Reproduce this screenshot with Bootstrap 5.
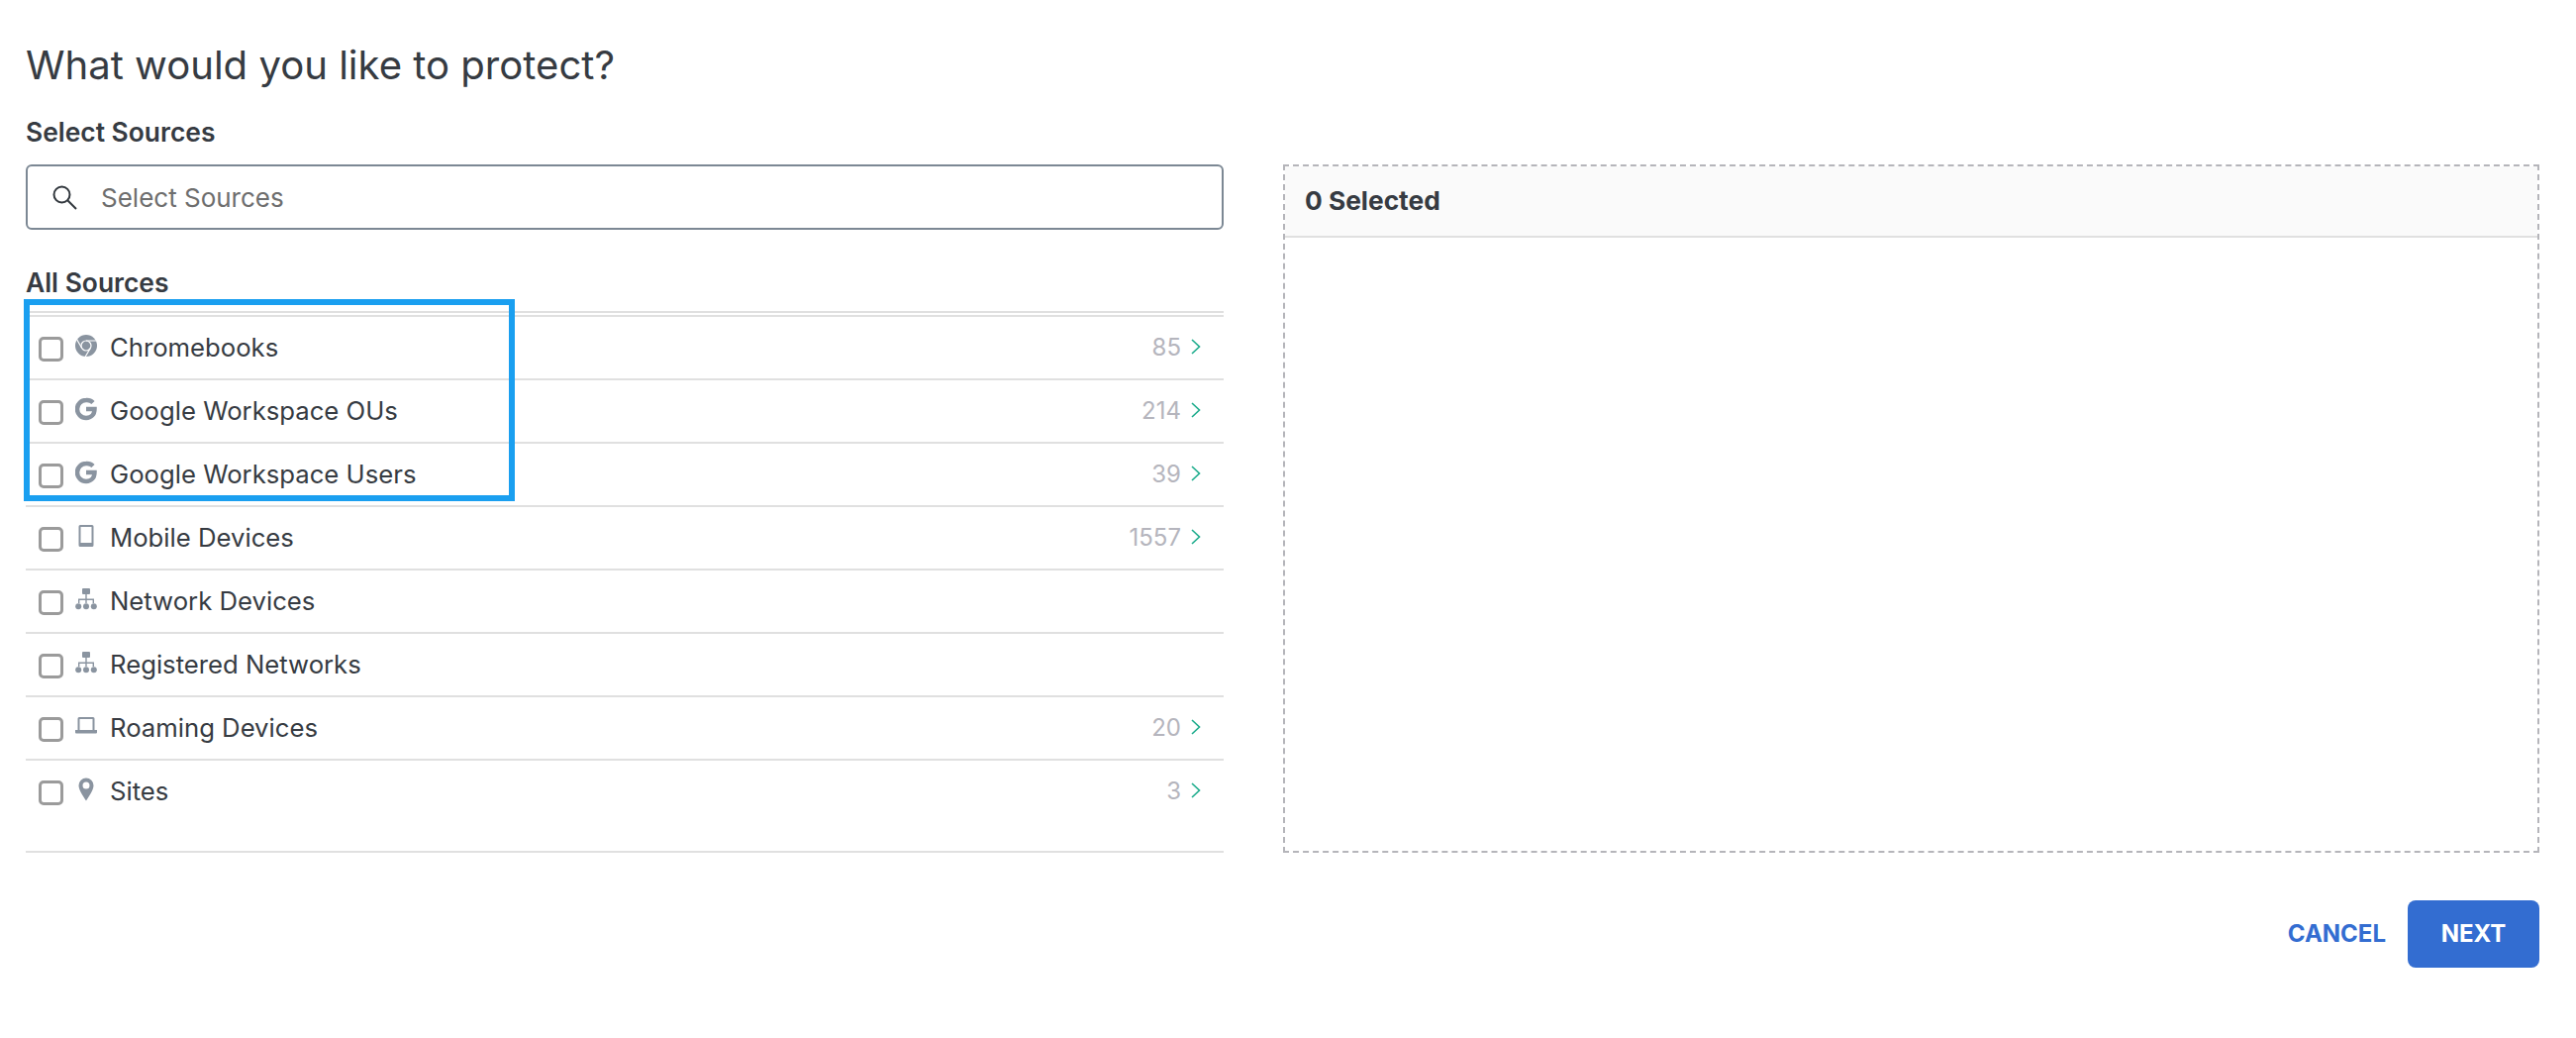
<!DOCTYPE html>
<html lang="en">
<head>
<meta charset="utf-8">
<title>What would you like to protect?</title>
<link href="https://cdn.jsdelivr.net/npm/bootstrap@5.3.0/dist/css/bootstrap.min.css" rel="stylesheet">
<style>
body{font-family:Inter,"Liberation Sans",sans-serif;color:#343a40;background:#fff;overflow:hidden}
.page-wrap{padding:43px 37px 0 26px}
.page-title{font-size:40.100px;line-height:46px;font-weight:400;margin:0 0 28px;color:#363b42}
.field-label{font-size:26.400px;line-height:32px;font-weight:600;margin:0;color:#363b42}
.panels{gap:60px;height:695px;margin-top:17px}
.left-pane{width:1210px;flex:none}
.right-pane{flex:1;border:2px dashed #b5b5ba}
.search-box{height:66px;border:2px solid #7c8894;border-radius:6px;margin:0 0 37px;padding:0 24px}
.search-box input{border:0;outline:0;flex:1;font-size:26px;color:#333;padding:0;margin-left:24px;background:transparent}
.search-box input::placeholder{color:#6e6e6e;opacity:1}
.list-wrap{margin-top:13px;border-top:2px solid #e0e0e0;padding-top:2px;height:547px;border-bottom:2px solid #e0e0e0;position:relative}
.src-row{height:64px;border-top:2px solid #e0e0e0;padding:0 23px 0 13px;font-size:25.700px}
.src-row:last-child{border-bottom:2px solid #e0e0e0;height:66px}
.src-row .form-check-input{width:25px;height:25px;margin:2px 12px 0 0;border:3px solid #9b9b9b;border-radius:5px;flex:none}
.src-icon{width:22px;height:24px;flex:none;margin:-4px 13px 0 0;fill:#8a94a0}
.src-name{flex:1;color:#363b42}
.src-count{color:#b5b5bd;font-size:24px;margin-right:10px}
.src-chev{width:10px;height:16px;flex:none;margin-top:-2px}
.hilite{position:absolute;left:-2px;top:-14px;width:496px;height:204px;border:6px solid #1a9ff0;pointer-events:none}
.sel-head{height:72px;background:#fafafa;border-bottom:2px solid #e0e0e0;padding:0 20px;font-size:26.300px;font-weight:700;color:#363b42}
.foot{margin-top:48px;gap:22px}
.btn-cancel{color:#336dd1;font-size:24px;font-weight:700;padding:0;border:0;background:none}
.btn-next{width:133px;height:68px;background:#336dd1;border:0;border-radius:8px;color:#fff;font-size:24px;font-weight:700}
</style>
</head>
<body>
<div class="page-wrap">
  <h1 class="page-title">What would you like to protect?</h1>
  <p class="field-label">Select Sources</p>
  <div class="d-flex panels">
    <div class="left-pane">
      <div class="search-box d-flex align-items-center">
        <svg width="26" height="26" viewBox="0 0 26 26" fill="none" stroke="#30363c" stroke-width="2"><circle cx="10.500" cy="10.500" r="8"/><path d="M16.500 16.500 25 25"/></svg>
        <input type="text" placeholder="Select Sources" aria-label="Select Sources">
      </div>
      <p class="field-label">All Sources</p>
      <div class="list-wrap">
        <div class="src-row d-flex align-items-center">
          <input class="form-check-input" type="checkbox" aria-label="Chromebooks">
          <svg class="src-icon" viewBox="0 0 22 24"><circle cx="11" cy="12" r="11"/><g fill="none" stroke="#fff" stroke-width="1.200"><circle cx="11" cy="12" r="5"/><path d="M11 7h10M15.300 14.500 10 23.500M6.700 14.500 1.500 5.500"/></g></svg>
          <span class="src-name">Chromebooks</span>
          <span class="src-count">85</span>
          <svg class="src-chev" viewBox="0 0 10 16" fill="none" stroke="#1aab8b" stroke-width="1.600"><path d="M1 1l7.500 7L1 15"/></svg>
        </div>
        <div class="src-row d-flex align-items-center">
          <input class="form-check-input" type="checkbox" aria-label="Google Workspace OUs">
          <svg class="src-icon" viewBox="0 0 22 24"><path fill="none" stroke="#8a94a0" stroke-width="4.500" d="M18 5.500A8.800 8.800 0 0 0 11 3a9 9 0 1 0 0 18c5 0 8.500-3.500 8.500-9H11"/></svg>
          <span class="src-name">Google Workspace OUs</span>
          <span class="src-count">214</span>
          <svg class="src-chev" viewBox="0 0 10 16" fill="none" stroke="#1aab8b" stroke-width="1.600"><path d="M1 1l7.500 7L1 15"/></svg>
        </div>
        <div class="src-row d-flex align-items-center">
          <input class="form-check-input" type="checkbox" aria-label="Google Workspace Users">
          <svg class="src-icon" viewBox="0 0 22 24"><path fill="none" stroke="#8a94a0" stroke-width="4.500" d="M18 5.500A8.800 8.800 0 0 0 11 3a9 9 0 1 0 0 18c5 0 8.500-3.500 8.500-9H11"/></svg>
          <span class="src-name">Google Workspace Users</span>
          <span class="src-count">39</span>
          <svg class="src-chev" viewBox="0 0 10 16" fill="none" stroke="#1aab8b" stroke-width="1.600"><path d="M1 1l7.500 7L1 15"/></svg>
        </div>
        <div class="src-row d-flex align-items-center">
          <input class="form-check-input" type="checkbox" aria-label="Mobile Devices">
          <svg class="src-icon" viewBox="0 0 22 24"><path fill-rule="evenodd" d="M5 1h12a1.500 1.500 0 0 1 1.500 1.500v19A1.500 1.500 0 0 1 17 23H5a1.500 1.500 0 0 1-1.500-1.500v-19A1.500 1.500 0 0 1 5 1Zm.5 2v16h11V3Z"/></svg>
          <span class="src-name">Mobile Devices</span>
          <span class="src-count">1557</span>
          <svg class="src-chev" viewBox="0 0 10 16" fill="none" stroke="#1aab8b" stroke-width="1.600"><path d="M1 1l7.500 7L1 15"/></svg>
        </div>
        <div class="src-row d-flex align-items-center">
          <input class="form-check-input" type="checkbox" aria-label="Network Devices">
          <svg class="src-icon" viewBox="0 0 22 24"><rect x="7" y="1" width="8" height="6" rx="1"/><path d="M10.300 7h1.400v4.500H19V16h-1.400v-3H11.700v3h-1.400v-3H4.400v3H3v-4.500h7.300Z"/><circle cx="3.200" cy="19.300" r="3"/><circle cx="11" cy="19.300" r="3"/><circle cx="18.800" cy="19.300" r="3"/></svg>
          <span class="src-name">Network Devices</span>
        </div>
        <div class="src-row d-flex align-items-center">
          <input class="form-check-input" type="checkbox" aria-label="Registered Networks">
          <svg class="src-icon" viewBox="0 0 22 24"><rect x="7" y="1" width="8" height="6" rx="1"/><path d="M10.300 7h1.400v4.500H19V16h-1.400v-3H11.700v3h-1.400v-3H4.400v3H3v-4.500h7.300Z"/><circle cx="3.200" cy="19.300" r="3"/><circle cx="11" cy="19.300" r="3"/><circle cx="18.800" cy="19.300" r="3"/></svg>
          <span class="src-name">Registered Networks</span>
        </div>
        <div class="src-row d-flex align-items-center">
          <input class="form-check-input" type="checkbox" aria-label="Roaming Devices">
          <svg class="src-icon" viewBox="0 0 22 24"><path fill-rule="evenodd" d="M4 3h14a1.500 1.500 0 0 1 1.500 1.500V16H22v2.500a1 1 0 0 1-1 1H1a1 1 0 0 1-1-1V16h2.500V4.500A1.500 1.500 0 0 1 4 3Zm.5 2v11h13V5Z"/></svg>
          <span class="src-name">Roaming Devices</span>
          <span class="src-count">20</span>
          <svg class="src-chev" viewBox="0 0 10 16" fill="none" stroke="#1aab8b" stroke-width="1.600"><path d="M1 1l7.500 7L1 15"/></svg>
        </div>
        <div class="src-row d-flex align-items-center">
          <input class="form-check-input" type="checkbox" aria-label="Sites">
          <svg class="src-icon" viewBox="0 0 22 24"><path fill-rule="evenodd" d="M11 .5a7.500 7.500 0 0 1 7.500 7.500c0 4.500-4.500 11-7.500 15.500C8 19 3.500 12.500 3.500 8A7.500 7.500 0 0 1 11 .5Zm0 4a3.500 3.500 0 1 0 0 7 3.500 3.500 0 0 0 0-7Z"/></svg>
          <span class="src-name">Sites</span>
          <span class="src-count">3</span>
          <svg class="src-chev" viewBox="0 0 10 16" fill="none" stroke="#1aab8b" stroke-width="1.600"><path d="M1 1l7.500 7L1 15"/></svg>
        </div>
        <div class="hilite"></div>
      </div>
    </div>
    <div class="right-pane">
      <div class="sel-head d-flex align-items-center">0 Selected</div>
    </div>
  </div>
  <div class="foot d-flex justify-content-end align-items-center">
    <button type="button" class="btn btn-cancel">CANCEL</button>
    <button type="button" class="btn btn-next">NEXT</button>
  </div>
</div>
<script src="https://cdn.jsdelivr.net/npm/bootstrap@5.3.0/dist/js/bootstrap.bundle.min.js"></script>
</body>
</html>
